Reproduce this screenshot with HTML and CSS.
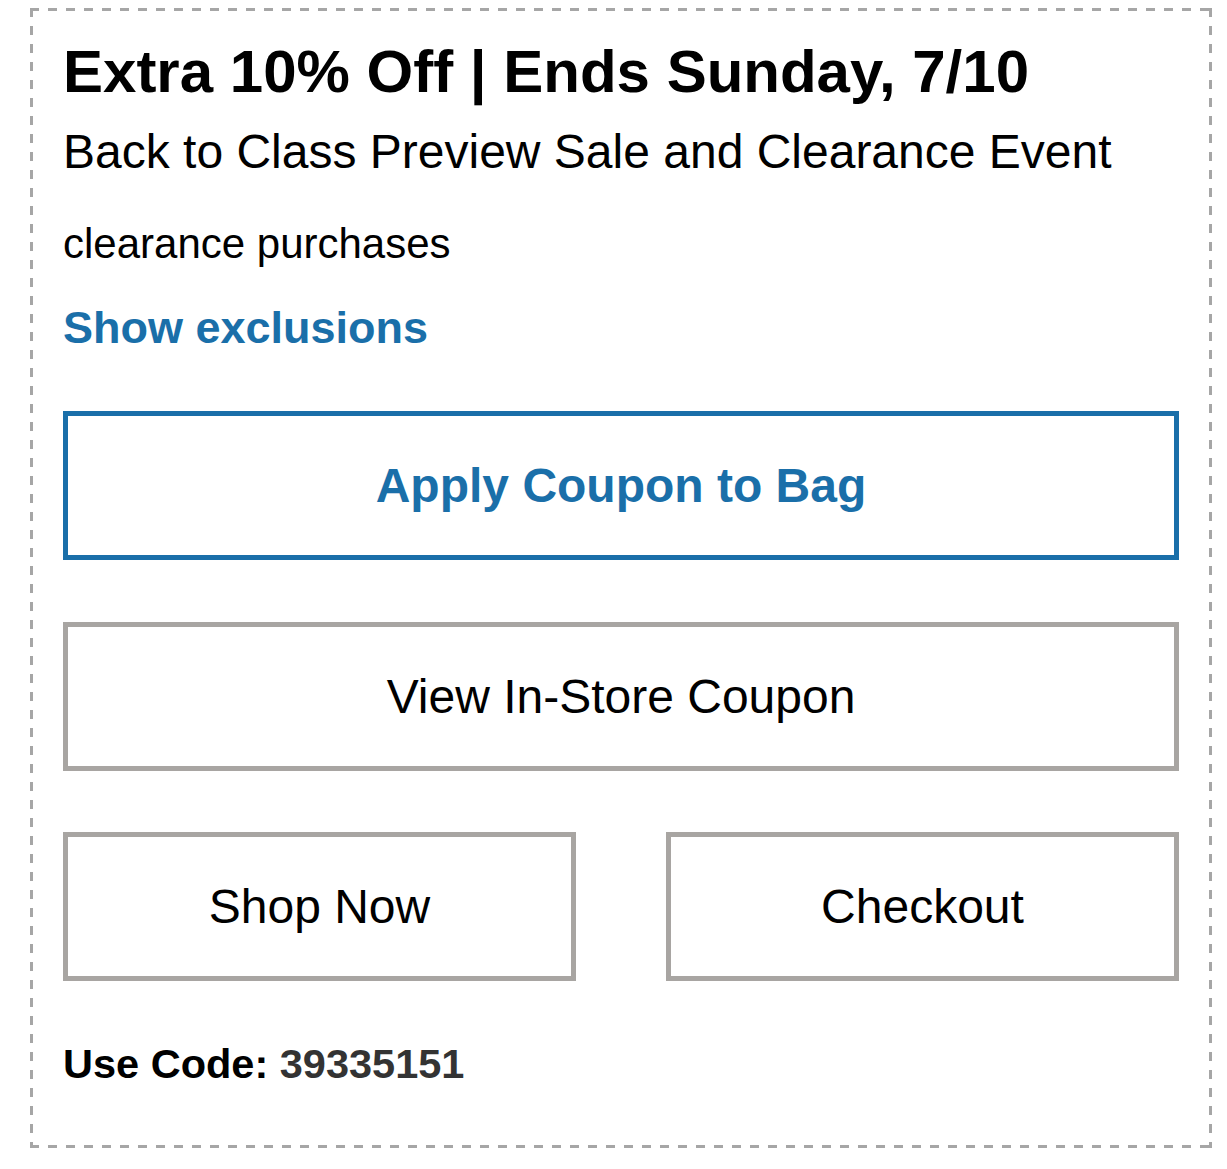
FILE: index.html
```html
<!DOCTYPE html>
<html lang="en">
<head>
<meta charset="utf-8">
<title>Coupon</title>
<link rel="stylesheet" href="styles.css">
</head>
<body>
<div class="page">
  <div class="coupon">
    <h1 class="title">Extra 10% Off | Ends Sunday, 7/10</h1>
    <p class="subtitle">Back to Class Preview Sale and Clearance Event</p>
    <p class="details">clearance purchases</p>
    <a class="exclusions" href="#">Show exclusions</a>
    <div class="actions">
      <button class="btn btn-primary" type="button">Apply Coupon to Bag</button>
      <button class="btn" type="button">View In-Store Coupon</button>
      <div class="btn-row">
        <button class="btn" type="button">Shop Now</button>
        <button class="btn" type="button">Checkout</button>
      </div>
    </div>
    <p class="code">Use Code: <span class="code-num">39335151</span></p>
  </div>
</div>
</body>
</html>
```

FILE: styles.css
```css
html, body {
  margin: 0;
  padding: 0;
  background: #ffffff;
}

body {
  font-family: "Liberation Sans", Arial, sans-serif;
  color: #000;
}

.page {
  padding: 8px 15px 22px 30px;
}

.coupon {
  padding: 29px 33px 59px 33px;
  display: flex;
  flex-direction: column;
  background:
    repeating-linear-gradient(90deg, #a6a6a6 0 9px, transparent 9px 18px) left top / 100% 3px no-repeat,
    repeating-linear-gradient(90deg, #a6a6a6 0 9px, transparent 9px 18px) left bottom / 100% 3px no-repeat,
    repeating-linear-gradient(180deg, #a6a6a6 0 9px, transparent 9px 18px) left top / 3px 100% no-repeat,
    repeating-linear-gradient(180deg, #a6a6a6 0 9px, transparent 9px 18px) right top / 3px 100% no-repeat;
}

.title {
  margin: 0;
  font-size: 60px;
  line-height: 70px;
  font-weight: 700;
}

.subtitle {
  margin: 16px 0 0 0;
  font-size: 48px;
  line-height: 58px;
}

.details {
  margin: 38px 0 0 0;
  font-size: 42px;
  line-height: 50px;
}

.exclusions {
  margin-top: 33px;
  font-size: 45px;
  line-height: 52px;
  font-weight: 700;
  color: #1a6fa9;
  text-decoration: none;
  align-self: flex-start;
}

.actions {
  margin-top: 57px;
  display: flex;
  flex-direction: column;
  gap: 62px;
}

.btn {
  box-sizing: border-box;
  height: 149px;
  width: 100%;
  border: 5px solid #a8a5a2;
  background: #fff;
  font-family: "Liberation Sans", Arial, sans-serif;
  font-size: 48px;
  color: #000;
  padding: 0;
  margin: 0;
}

.btn-primary {
  border-color: #1a6fa9;
  color: #1a6fa9;
  font-weight: 700;
}

.btn-row {
  display: grid;
  grid-template-columns: 1fr 1fr;
  column-gap: 90px;
  margin-top: -1px;
}

.code {
  margin: 58px 0 0 0;
  font-size: 41.5px;
  line-height: 50px;
  font-weight: 700;
}

.code-num {
  color: #333333;
}
```
